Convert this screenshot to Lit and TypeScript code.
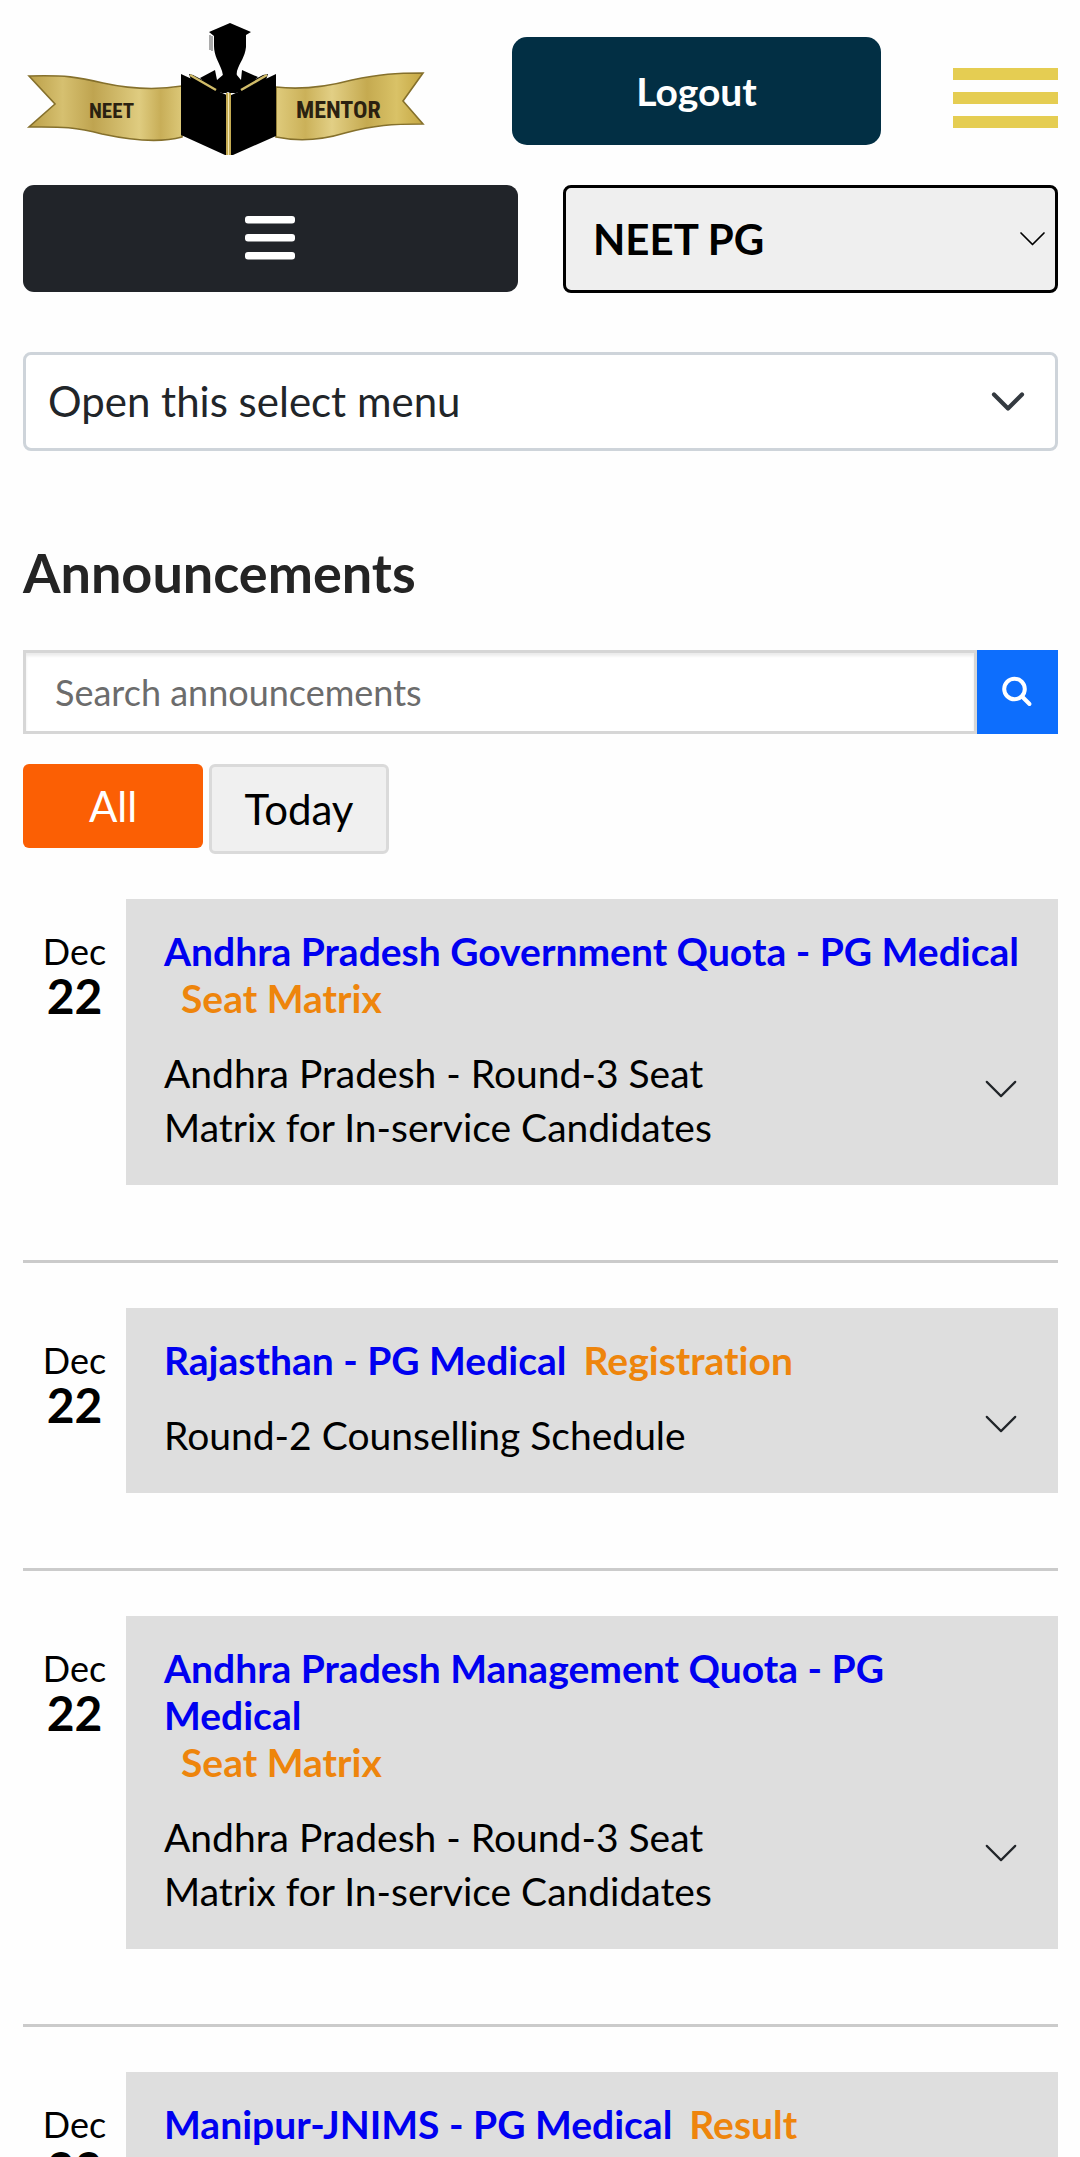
import { LitElement, html, css } from "lit";
import { customElement, property, state } from "lit/decorators.js";
import { classMap } from "lit/directives/class-map.js";

interface Announcement {
  month: string;
  day: string;
  title: string;
  tag: string;
  text: string;
}

const ANNOUNCEMENTS: Announcement[] = [
  {
    month: "Dec",
    day: "22",
    title: "Andhra Pradesh Government Quota - PG Medical",
    tag: "Seat Matrix",
    text: "Andhra Pradesh - Round-3 Seat Matrix for In-service Candidates",
  },
  {
    month: "Dec",
    day: "22",
    title: "Rajasthan - PG Medical",
    tag: "Registration",
    text: "Round-2 Counselling Schedule",
  },
  {
    month: "Dec",
    day: "22",
    title: "Andhra Pradesh Management Quota - PG Medical",
    tag: "Seat Matrix",
    text: "Andhra Pradesh - Round-3 Seat Matrix for In-service Candidates",
  },
  {
    month: "Dec",
    day: "22",
    title: "Manipur-JNIMS - PG Medical",
    tag: "Result",
    text: "",
  },
];

@customElement("brand-logo")
export class BrandLogo extends LitElement {
  static styles = css`
    :host {
      display: block;
    }
    .logo {
      display: block;
      width: 100%;
      height: auto;
    }
    .word {
      font-family: "Liberation Sans Narrow", "Roboto Condensed", "Liberation Sans", sans-serif;
      font-weight: 700;
      fill: #2b2110;
    }
  `;

  render() {
    return html`
      <svg class="logo" viewBox="23 18 408 146" role="img" aria-label="NEET MENTOR">
        <defs>
          <linearGradient id="left" x1="0" y1="0" x2="1" y2="0">
            <stop offset="0" stop-color="#bb9f48"></stop>
            <stop offset="0.22" stop-color="#d6c070"></stop>
            <stop offset="0.42" stop-color="#bfa450"></stop>
            <stop offset="0.72" stop-color="#dfcc80"></stop>
            <stop offset="0.86" stop-color="#c8ae58"></stop>
            <stop offset="1" stop-color="#dcc878"></stop>
          </linearGradient>
          <linearGradient id="right" x1="0" y1="0" x2="1" y2="0">
            <stop offset="0" stop-color="#dfcb7c"></stop>
            <stop offset="0.2" stop-color="#cbb159"></stop>
            <stop offset="0.38" stop-color="#e2cf85"></stop>
            <stop offset="0.62" stop-color="#c5aa50"></stop>
            <stop offset="0.82" stop-color="#d9c267"></stop>
            <stop offset="1" stop-color="#c5a743"></stop>
          </linearGradient>
        </defs>
        <path
          d="M29 76 C65 75 78 77 103 83 C135 90 158 90 182 86 V137 C160 143 130 140 102 134 C72 126 58 127 29 127 L55 104 Z"
          fill="url(#left)" stroke="#85702c" stroke-width="1.6"></path>
        <path
          d="M423 73 C396 73 380 74 352 80 C322 88 300 90 276 87 V137 C300 142 322 140 345 133 C375 125 392 124 423 124 L403 101 Z"
          fill="url(#right)" stroke="#85702c" stroke-width="1.6"></path>
        <path d="M200 78 L215 70 L217 80 L224 74 H236 L241 80 L242 70 L258 77 L240 92 H216 Z" fill="#000"></path>
        <path d="M209 32 L230 23 L251 32 L246 35 L246 47 C245 57 240 62 237 71 L236 80 H224 L222 71 C219 62 214 56 214 46 V36 Z" fill="#000"></path>
        <path d="M210 35 L210 50 M212 36 V51" stroke="#888" stroke-width="1.4" fill="none"></path>
        <path d="M189 74 L193 75 L228 93 L263 75 L268 74 L266 80 L236 93 H222 L191 80 Z" fill="#000"></path>
        <path d="M181 74 L220 92 L229 96 L238 92 L276 74 V136 L233 155 H225 L181 135 Z" fill="#000"></path>
        <path d="M190 75 L216 90 M267 75 L241 90" stroke="#d1bc69" stroke-width="2.4"></path>
        <rect x="226" y="93" width="5" height="62" fill="#c4aa52"></rect>
        <rect x="228" y="93" width="1" height="62" fill="#f3e8b4"></rect>
        <text class="word" x="89" y="118" font-size="21">NEET</text>
        <text class="word" x="296" y="118" font-size="24">MENTOR</text>
      </svg>
    `;
  }
}

@customElement("announcement-row")
export class AnnouncementRow extends LitElement {
  static styles = css`
    :host {
      display: block;
    }
    .row {
      display: grid;
      grid-template-columns: 103px minmax(0, 1fr);
    }
    .date {
      display: flex;
      flex-direction: column;
      align-items: center;
      padding-top: 31px;
      color: #000;
    }
    .month {
      font-size: 36px;
      line-height: 42px;
    }
    .day {
      font-size: 48px;
      line-height: 48px;
      font-weight: 700;
    }
    .card {
      background: #dedede;
      padding: 29px 38px 31px;
      color: #000;
      font-size: 39px;
    }
    .heading {
      display: flow-root;
      margin: 0 0 24px;
      font-size: inherit;
      line-height: 47px;
      font-weight: 700;
    }
    .link {
      display: inline-block;
      vertical-align: top;
      color: #0000f0;
      text-decoration: none;
    }
    .tag {
      display: inline-block;
      vertical-align: top;
      margin-left: 17px;
      color: #ee850c;
    }
    .body {
      display: flex;
      align-items: center;
      justify-content: space-between;
    }
    .text {
      margin: 0;
      width: 75%;
      min-height: 54px;
      line-height: 54px;
    }
    .toggle {
      padding: 0 0 22px;
      border: 0;
      background: none;
      cursor: pointer;
    }
    .chevron {
      display: block;
      width: 38px;
      height: 24px;
    }
  `;

  @property({ attribute: false }) item!: Announcement;

  render() {
    const { month, day, title, tag, text } = this.item;
    return html`
      <article class="row">
        <div class="date">
          <span class="month">${month}</span>
          <span class="day">${day}</span>
        </div>
        <div class="card">
          <h3 class="heading"><a class="link" href="#">${title}</a><span class="tag">${tag}</span></h3>
          <div class="body">
            <p class="text">${text}</p>
            <button class="toggle" type="button" aria-label="Show details">
              <svg class="chevron" viewBox="0 3 16 10" aria-hidden="true">
                <path d="M2 5 L8 11 L14 5" fill="none" stroke="#212529" stroke-width="0.9" stroke-linecap="round" stroke-linejoin="round"></path>
              </svg>
            </button>
          </div>
        </div>
      </article>
    `;
  }
}

@customElement("app-root")
export class AppRoot extends LitElement {
  static styles = css`
    :host {
      display: block;
      min-height: 100vh;
      box-sizing: border-box;
      overflow: hidden;
      padding: 0 22px 0 23px;
      background: #fefefe;
      color: #212529;
      font-family: Lato, "Open Sans", sans-serif;
      font-variant-ligatures: none;
    }
    *,
    *::before,
    *::after {
      box-sizing: border-box;
    }
    button,
    input,
    select {
      margin: 0;
      font-family: inherit;
    }
    button {
      cursor: pointer;
    }
    .header {
      display: flex;
      align-items: center;
      gap: 72px;
      min-height: 182px;
    }
    .brand {
      flex: 0 1 408px;
      min-width: 0;
      margin-right: auto;
    }
    .logout {
      flex: 0 1 369px;
      height: 108px;
      margin-left: -72px;
      border: 0;
      border-radius: 15px;
      background: #022f44;
      color: #fff;
      font-size: 39px;
      font-weight: 700;
    }
    .burger {
      display: flex;
      flex-direction: column;
      gap: 12px;
      width: 105px;
      padding: 14px 0 0;
      border: 0;
      background: none;
    }
    .bar {
      height: 12px;
      background: #e5cd52;
    }
    .controls {
      display: grid;
      grid-template-columns: 1fr 1fr;
      gap: 45px;
      margin-top: 3px;
    }
    .menu {
      display: flex;
      align-items: center;
      justify-content: center;
      height: 107px;
      padding: 0;
      border: 0;
      border-radius: 11px;
      background: #212429;
    }
    .menu-icon {
      width: 52px;
      height: 46px;
    }
    .picker {
      display: grid;
      align-items: center;
    }
    .select {
      grid-area: 1 / 1;
      width: 100%;
      appearance: none;
      border-radius: 8px;
      font-size: 42px;
    }
    .course {
      height: 108px;
      padding: 0 50px 0 27px;
      border: 3px solid #000;
      background: #efefef;
      color: #000;
      font-weight: 700;
    }
    .general {
      height: 99px;
      padding: 0 90px 2px 22px;
      border: 3px solid #ced4da;
      background: #fff;
      color: #212529;
    }
    .wide {
      margin-top: 59px;
    }
    .arrow {
      grid-area: 1 / 1;
      justify-self: end;
      pointer-events: none;
    }
    .arrow-thin {
      width: 27px;
      height: 16px;
      margin-right: 12px;
    }
    .arrow-bold {
      width: 34px;
      height: 20px;
      margin-right: 33px;
    }
    .title {
      margin: 89px 0 45px;
      color: #242424;
      font-size: 54px;
      line-height: 65px;
      font-weight: 700;
    }
    .search {
      display: flex;
      height: 84px;
    }
    .search-input {
      flex: 1;
      min-width: 0;
      padding: 0 29px;
      border: 3px solid #d6d6d6;
      border-radius: 0;
      background: #fff;
      box-shadow: inset 0 3px 3px rgba(0, 0, 0, 0.08);
      color: #212529;
      font-size: 36px;
      outline: none;
    }
    .search-input::placeholder {
      color: #6c6c6c;
      opacity: 1;
    }
    .search-button {
      display: flex;
      align-items: center;
      justify-content: center;
      width: 81px;
      padding: 0;
      border: 0;
      background: #0d6efd;
    }
    .search-icon {
      width: 32px;
      height: 32px;
    }
    .tabs {
      display: flex;
      align-items: flex-start;
      gap: 6px;
      margin: 30px 0 45px;
    }
    .tab {
      width: 180px;
      height: 90px;
      padding: 0;
      border: 3px solid #dadada;
      border-radius: 6px;
      background: #f0f0f0;
      color: #000;
      font-size: 42px;
    }
    .tab.active {
      height: 84px;
      border: 0;
      background: #fb5f04;
      color: #fff;
    }
    .list {
      margin: 0;
      padding: 0;
      list-style: none;
    }
    .item + .item {
      margin-top: 75px;
      padding-top: 45px;
      border-top: 3px solid #cbcbcb;
    }
    @media (max-width: 800px) {
      .header {
        gap: 24px;
      }
      .logout {
        margin-left: 0;
      }
    }
  `;

  @state() private filter = "All";

  render() {
    return html`
      <header class="header">
        <brand-logo class="brand"></brand-logo>
        <button class="logout" type="button">Logout</button>
        <button class="burger" type="button" aria-label="Open navigation">
          <span class="bar"></span><span class="bar"></span><span class="bar"></span>
        </button>
      </header>
      <div class="controls">
        <button class="menu" type="button" aria-label="Toggle sidebar">
          <svg class="menu-icon" viewBox="0 0 52 46" aria-hidden="true">
            <g fill="#fff">
              <rect x="0" y="0" width="50" height="7.500" rx="3"></rect>
              <rect x="0" y="18" width="50" height="7.500" rx="3"></rect>
              <rect x="0" y="36" width="50" height="7.500" rx="3"></rect>
            </g>
          </svg>
        </button>
        <div class="picker">
          <select class="select course" aria-label="Course">
            <option>NEET PG</option>
          </select>
          <svg class="arrow arrow-thin" viewBox="0 0 27 16" aria-hidden="true">
            <path d="M2 2 L13.500 13.500 L25 2" fill="none" stroke="#000" stroke-width="1.7" stroke-linecap="round" stroke-linejoin="round"></path>
          </svg>
        </div>
      </div>
      <div class="picker wide">
        <select class="select general" aria-label="Section">
          <option>Open this select menu</option>
        </select>
        <svg class="arrow arrow-bold" viewBox="0 0 34 20" aria-hidden="true">
          <path d="M3 2.500 L17 16.500 L31 2.500" fill="none" stroke="#343a40" stroke-width="4.200" stroke-linecap="round" stroke-linejoin="round"></path>
        </svg>
      </div>
      <main>
        <h2 class="title">Announcements</h2>
        <form class="search" @submit=${(e: Event) => e.preventDefault()}>
          <input class="search-input" type="search" placeholder="Search announcements" aria-label="Search announcements" />
          <button class="search-button" type="submit" aria-label="Search">
            <svg class="search-icon" viewBox="0 0 32 32" aria-hidden="true">
              <g fill="none" stroke="#fff" stroke-width="4" stroke-linecap="round">
                <circle cx="12.500" cy="13" r="10.300"></circle>
                <path d="M20.500 21 L27.500 28"></path>
              </g>
            </svg>
          </button>
        </form>
        <div class="tabs">
          ${["All", "Today"].map(
            (name) => html`
              <button
                class=${classMap({ tab: true, active: this.filter === name })}
                type="button"
                aria-pressed=${this.filter === name ? "true" : "false"}
                @click=${() => (this.filter = name)}
              >${name}</button>
            `
          )}
        </div>
        <ul class="list">
          ${ANNOUNCEMENTS.map(
            (item) => html`<li class="item"><announcement-row .item=${item}></announcement-row></li>`
          )}
        </ul>
      </main>
    `;
  }
}
